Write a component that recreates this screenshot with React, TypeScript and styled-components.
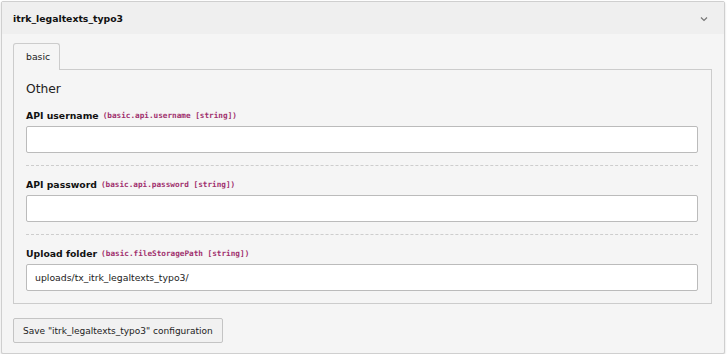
import styled, { createGlobalStyle } from "styled-components";

const fields = [
    { label: "API username", path: "basic.api.username", type: "string", value: "" },
    { label: "API password", path: "basic.api.password", type: "string", value: "" },
    { label: "Upload folder", path: "basic.fileStoragePath", type: "string", value: "uploads/tx_itrk_legaltexts_typo3/" },
];

function App() {
    return (
        <>
            <GlobalStyles />
            <Panel>
                <Header>
                    <Title>itrk_legaltexts_typo3</Title>
                    <Chevron width="8" height="6" viewBox="0 0 8 6">
                        <path d="M1 1.5 L4 4.5 L7 1.5" fill="none" stroke="#777" strokeWidth="1.2" />
                    </Chevron>
                </Header>

                <Body>
                    <Tabs>
                        <Tab>basic</Tab>
                    </Tabs>

                    <TabPanel>
                        <Heading>Other</Heading>

                        {fields.map((f) => (
                            <Field key={f.path}>
                                <Label>
                                    <LabelText>{f.label}</LabelText>
                                    <Path>({f.path} [{f.type}])</Path>
                                </Label>
                                <Input type="text" defaultValue={f.value} />
                            </Field>
                        ))}
                    </TabPanel>

                    <SaveButton>Save "itrk_legaltexts_typo3" configuration</SaveButton>
                </Body>
            </Panel>
        </>
    );
}

export default App;

const GlobalStyles = createGlobalStyle`
  * {
    margin: 0;
    padding: 0;
    box-sizing: border-box;
  }

  body {
    padding: 1px 2px 0 1px;
    background: #ffffff;
    font-family: "DejaVu Sans", Verdana, sans-serif;
    font-size: 9.3px;
    color: #222;
  }
`;

const Panel = styled.div`
    border: 1px solid #cfcfcf;
    border-radius: 2px;
    background: #f5f5f5;
    box-shadow: 0 1px 2px rgba(0, 0, 0, 0.18);
`;

const Header = styled.div`
    height: 32px;
    background: #efefef;
    display: flex;
    align-items: center;
    justify-content: space-between;
    padding: 0 16px 0 11px;
`;

const Title = styled.div`
    font-weight: bold;
    font-size: 9.3px;
    color: #111;
`;

const Chevron = styled.svg`
    display: block;
    margin-top: 1px;
`;

const Body = styled.div`
    padding: 9px 12px 10px 11px;
`;

const Tabs = styled.div`
    display: flex;
    margin-bottom: -1px;
    position: relative;
    z-index: 1;
`;

const Tab = styled.div`
    width: 47px;
    height: 27px;
    border: 1px solid #cccccc;
    border-bottom: none;
    border-radius: 3px 3px 0 0;
    background: #f5f5f5;
    color: #222;
    display: flex;
    align-items: center;
    padding-left: 12px;
    padding-bottom: 1px;
`;

const TabPanel = styled.div`
    border: 1px solid #cccccc;
    background: #f5f5f5;
    padding: 10px 13px 0 12px;
    display: flex;
    flex-direction: column;
`;

const Heading = styled.h2`
    font-weight: normal;
    font-size: 12.3px;
    line-height: 19px;
    margin-bottom: -2px;
    color: #222;
`;

const Field = styled.div`
    display: flex;
    flex-direction: column;
    padding: 12px 0 12px;
    border-bottom: 1px dashed #cdcdcd;

    &:last-child {
        border-bottom: none;
        padding-bottom: 12px;
    }
`;

const Label = styled.div`
    display: flex;
    align-items: baseline;
    gap: 4px;
    height: 14px;
    line-height: 14px;
    margin-bottom: 3px;
    overflow: visible;
`;

const LabelText = styled.span`
    font-weight: bold;
    color: #111;
`;

const Path = styled.code`
    font-family: "DejaVu Sans Mono", "Liberation Mono", monospace;
    font-size: 7.7px;
    line-height: 14px;
    font-weight: bold;
    color: #a0306d;
    position: relative;
    top: -1px;
`;

const Input = styled.input`
    display: block;
    height: 27px;
    border: 1px solid #bbbbbb;
    border-radius: 2px;
    background: #ffffff;
    padding: 0 8px;
    font-family: "DejaVu Sans", Verdana, sans-serif;
    font-size: 9.3px;
    color: #222;
    outline: none;
`;

const SaveButton = styled.button`
    margin-top: 14px;
    height: 25px;
    padding: 0 9px;
    border: 1px solid #c4c4c4;
    border-radius: 2px;
    background: #f1f1f1;
    font-family: "DejaVu Sans", Verdana, sans-serif;
    font-size: 9px;
    color: #222;
    cursor: pointer;
`;
